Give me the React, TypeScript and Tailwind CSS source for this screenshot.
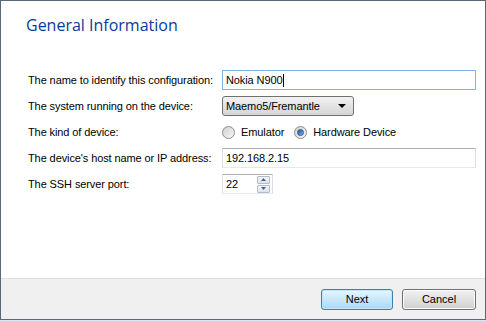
import React from 'react'

const font = { fontFamily: '"Liberation Sans", Arial, sans-serif' }

function Radio({ checked, label }: { checked?: boolean; label: string }) {
  return (
    <label className="flex items-center gap-[6px]">
      <span className="w-[13px] h-[13px] rounded-full border border-[#8e8f8f] bg-gradient-to-br from-[#d0d0d0] to-[#f6f6f6] flex items-center justify-center">
        {checked && (
          <span className="w-[7px] h-[7px] rounded-full bg-gradient-to-br from-[#1c4f9c] to-[#7eb6f0] border border-[#2a5a9c]" />
        )}
      </span>
      <span>{label}</span>
    </label>
  )
}

export default function App() {
  return (
    <div className="w-[486px] h-[321px] bg-[#dbe6f4] text-[11px] text-black" style={font}>
      <div className="h-[320px] border border-[#58677a] flex flex-col">
        <div className="flex-1 bg-white">
          <h1 className="pl-[25px] pt-[13px] text-[16px] leading-[22px] text-[#0a3aa0]" style={{ fontFamily: '"Open Sans", "Noto Sans", sans-serif' }}>
            General Information
          </h1>
          <div className="grid grid-cols-[194px_254px] gap-y-[6px] pl-[27px] mt-[34px] tracking-[-0.1px]">
            <div className="h-[20px] flex items-center">The name to identify this configuration:</div>
            <div className="h-[20px] border border-[#7eb4ea] flex items-center pl-[3px]">
              Nokia N900<span className="w-px h-[13px] bg-black ml-px" />
            </div>

            <div className="h-[20px] flex items-center">The system running on the device:</div>
            <div>
              <div className="w-[132px] h-[20px] border border-[#707070] rounded-[3px] bg-gradient-to-b from-[#f2f2f2] to-[#d5d5d5] flex items-center justify-between pl-[3px] pr-[7px]">
                <span>Maemo5/Fremantle</span>
                <svg width="8" height="4" viewBox="0 0 8 4"><path d="M0 0h8L4 4z" fill="#000" /></svg>
              </div>
            </div>

            <div className="h-[20px] flex items-center">The kind of device:</div>
            <div className="h-[20px] flex items-center gap-[10px]">
              <Radio label="Emulator" />
              <Radio checked label="Hardware Device" />
            </div>

            <div className="h-[20px] flex items-center">The device's host name or IP address:</div>
            <div className="h-[20px] border border-[#abadb3] border-b-[#e3e9ef] border-x-[#dbdfe6] flex items-center pl-[3px]">192.168.2.15</div>

            <div className="h-[20px] flex items-center">The SSH server port:</div>
            <div>
              <div className="w-[51px] h-[20px] border border-[#abadb3] border-b-[#e3e9ef] border-x-[#dbdfe6] flex items-center justify-between pl-[3px] pr-[2px]">
                <span>22</span>
                <div className="flex flex-col gap-px">
                  <div className="w-[13px] h-[8px] border border-[#b4bcc7] rounded-[1px] bg-gradient-to-b from-[#f5f7fa] to-[#dce3ec] flex items-center justify-center">
                    <svg width="5" height="3" viewBox="0 0 5 3"><path d="M0 3h5L2.5 0z" fill="#4d6185" /></svg>
                  </div>
                  <div className="w-[13px] h-[8px] border border-[#b4bcc7] rounded-[1px] bg-gradient-to-b from-[#f5f7fa] to-[#dce3ec] flex items-center justify-center">
                    <svg width="5" height="3" viewBox="0 0 5 3"><path d="M0 0h5L2.5 3z" fill="#4d6185" /></svg>
                  </div>
                </div>
              </div>
            </div>
          </div>
        </div>
        <div className="h-[41px] bg-[#f0f0f0] border-t border-[#dfdfdf] flex items-center justify-end gap-[9px] pr-[9px]">
          <button className="w-[72px] h-[21px] border border-[#3c7fb1] rounded-[3px] bg-gradient-to-b from-[#eaf6fd] to-[#a7d9f5] shadow-[inset_0_0_0_1px_#bfe7fb]">Next</button>
          <button className="w-[74px] h-[21px] border border-[#707070] rounded-[3px] bg-gradient-to-b from-[#f2f2f2] to-[#d0d0d0] shadow-[inset_0_0_0_1px_#fcfcfc]">Cancel</button>
        </div>
      </div>
    </div>
  )
}
